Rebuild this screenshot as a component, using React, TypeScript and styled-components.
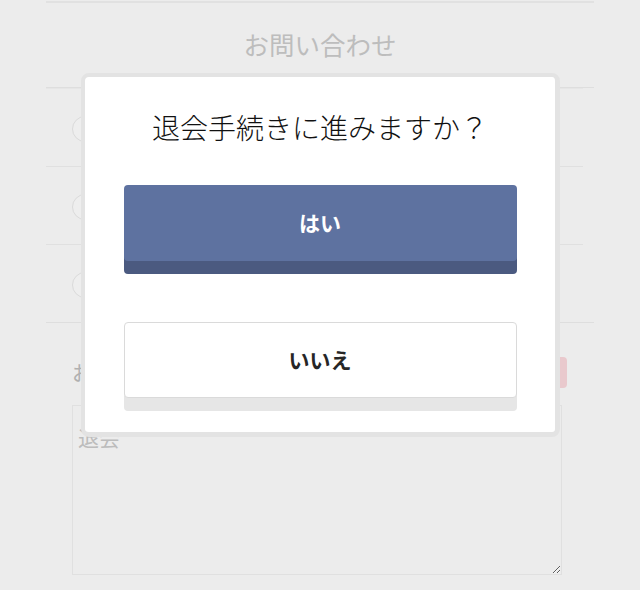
import React from "react";
import styled, { createGlobalStyle } from "styled-components";

const GlobalStyle = createGlobalStyle`
  html, body {
    margin: 0;
    padding: 0;
    background: #ececec;
    overflow: hidden;
  }
  body {
    font-family: "Noto Sans CJK JP", "Noto Sans", sans-serif;
  }
  * { box-sizing: border-box; }
`;

const Page = styled.div`
  width: 548px;
  margin: 0 auto;
  padding-top: 1px;
`;

const Header = styled.header`
  height: 87px;
  border-top: 2px solid #e1e1e1;
  border-bottom: 1px solid #dedede;
  display: flex;
  align-items: center;
  justify-content: center;
  font-size: 25.5px;
  color: #bdbdbd;
  padding-bottom: 3px;
`;

const List = styled.ul`
  list-style: none;
  margin: 0;
  padding: 0;
  border-bottom: 1px solid #dedede;
`;

const Row = styled.li`
  height: 78px;
  margin-right: 11px;
  padding-left: 26px;
  border-top: 1px solid #e0e0e0;
  display: flex;
  align-items: center;
  &:first-child { border-top-color: #e6e6e6; }
`;

const Radio = styled.span`
  width: 26px;
  height: 26px;
  border-radius: 50%;
  border: 1px solid #dadada;
  background: #eeeeee;
  margin-top: 3px;
`;

const FormSection = styled.section`
  padding: 34px 27px 0 26px;
`;

const LabelRow = styled.div`
  height: 31px;
  display: flex;
  align-items: center;
  justify-content: space-between;
`;

const Label = styled.span`
  font-size: 20px;
  color: #b0b0b0;
`;

const Badge = styled.span`
  height: 31px;
  padding: 0 10px;
  border-radius: 4px;
  background: #e9c9cd;
  color: #ffffff;
  font-size: 14px;
  display: flex;
  align-items: center;
`;

const TextArea = styled.textarea`
  display: block;
  margin-top: 17px;
  width: 490px;
  height: 170px;
  border: 1px solid #e0e0e0;
  background: transparent;
  padding: 17px 5px;
  font-family: "Noto Sans CJK JP", sans-serif;
  font-size: 21px;
  line-height: 28px;
  color: #bcbcbc;
  outline: none;
`;

const Overlay = styled.div`
  position: fixed;
  inset: 0;
  display: flex;
  justify-content: center;
  align-items: flex-start;
  padding-top: 73px;
`;

const Dialog = styled.div`
  width: 479px;
  background: #ffffff;
  border: 4px solid #e3e3e3;
  border-right-width: 5px;
  border-bottom-width: 5px;
  border-radius: 8px;
  padding: 30px 38px 21px 39px;
  display: flex;
  flex-direction: column;
`;

const Title = styled.h2`
  margin: 0;
  font-size: 28px;
  line-height: 40px;
  font-weight: 300;
  color: #111111;
  text-align: center;
  letter-spacing: 0;
`;

const Actions = styled.div`
  margin-top: 38px;
  display: flex;
  flex-direction: column;
  gap: 48px;
`;

const ChoiceButton = styled.button<{ $primary?: boolean }>`
  height: 76px;
  width: 100%;
  margin-bottom: 13px;
  padding: 0 0 3px;
  border-radius: 4px;
  font-family: "Noto Sans CJK JP", sans-serif;
  font-size: 21px;
  font-weight: 700;
  cursor: pointer;
  display: flex;
  align-items: center;
  justify-content: center;
  border: ${(p) => (p.$primary ? "none" : "1px solid #dadada")};
  background: ${(p) => (p.$primary ? "#5e72a0" : "#ffffff")};
  color: ${(p) => (p.$primary ? "#ffffff" : "#262626")};
  box-shadow: ${(p) =>
    p.$primary ? "0 13px 0 #4b5a80" : "0 13px 0 #e6e6e6"};
`;

export default function App() {
  return (
    <>
      <GlobalStyle />
      <Page>
        <Header>お問い合わせ</Header>
        <List>
          <Row>
            <Radio />
          </Row>
          <Row>
            <Radio />
          </Row>
          <Row>
            <Radio />
          </Row>
        </List>
        <FormSection>
          <LabelRow>
            <Label>お問い合わせ内容</Label>
            <Badge>必須</Badge>
          </LabelRow>
          <TextArea defaultValue="退会" />
        </FormSection>
      </Page>
      <Overlay>
        <Dialog>
          <Title>退会手続きに進みますか？</Title>
          <Actions>
            <ChoiceButton $primary>はい</ChoiceButton>
            <ChoiceButton>いいえ</ChoiceButton>
          </Actions>
        </Dialog>
      </Overlay>
    </>
  );
}
